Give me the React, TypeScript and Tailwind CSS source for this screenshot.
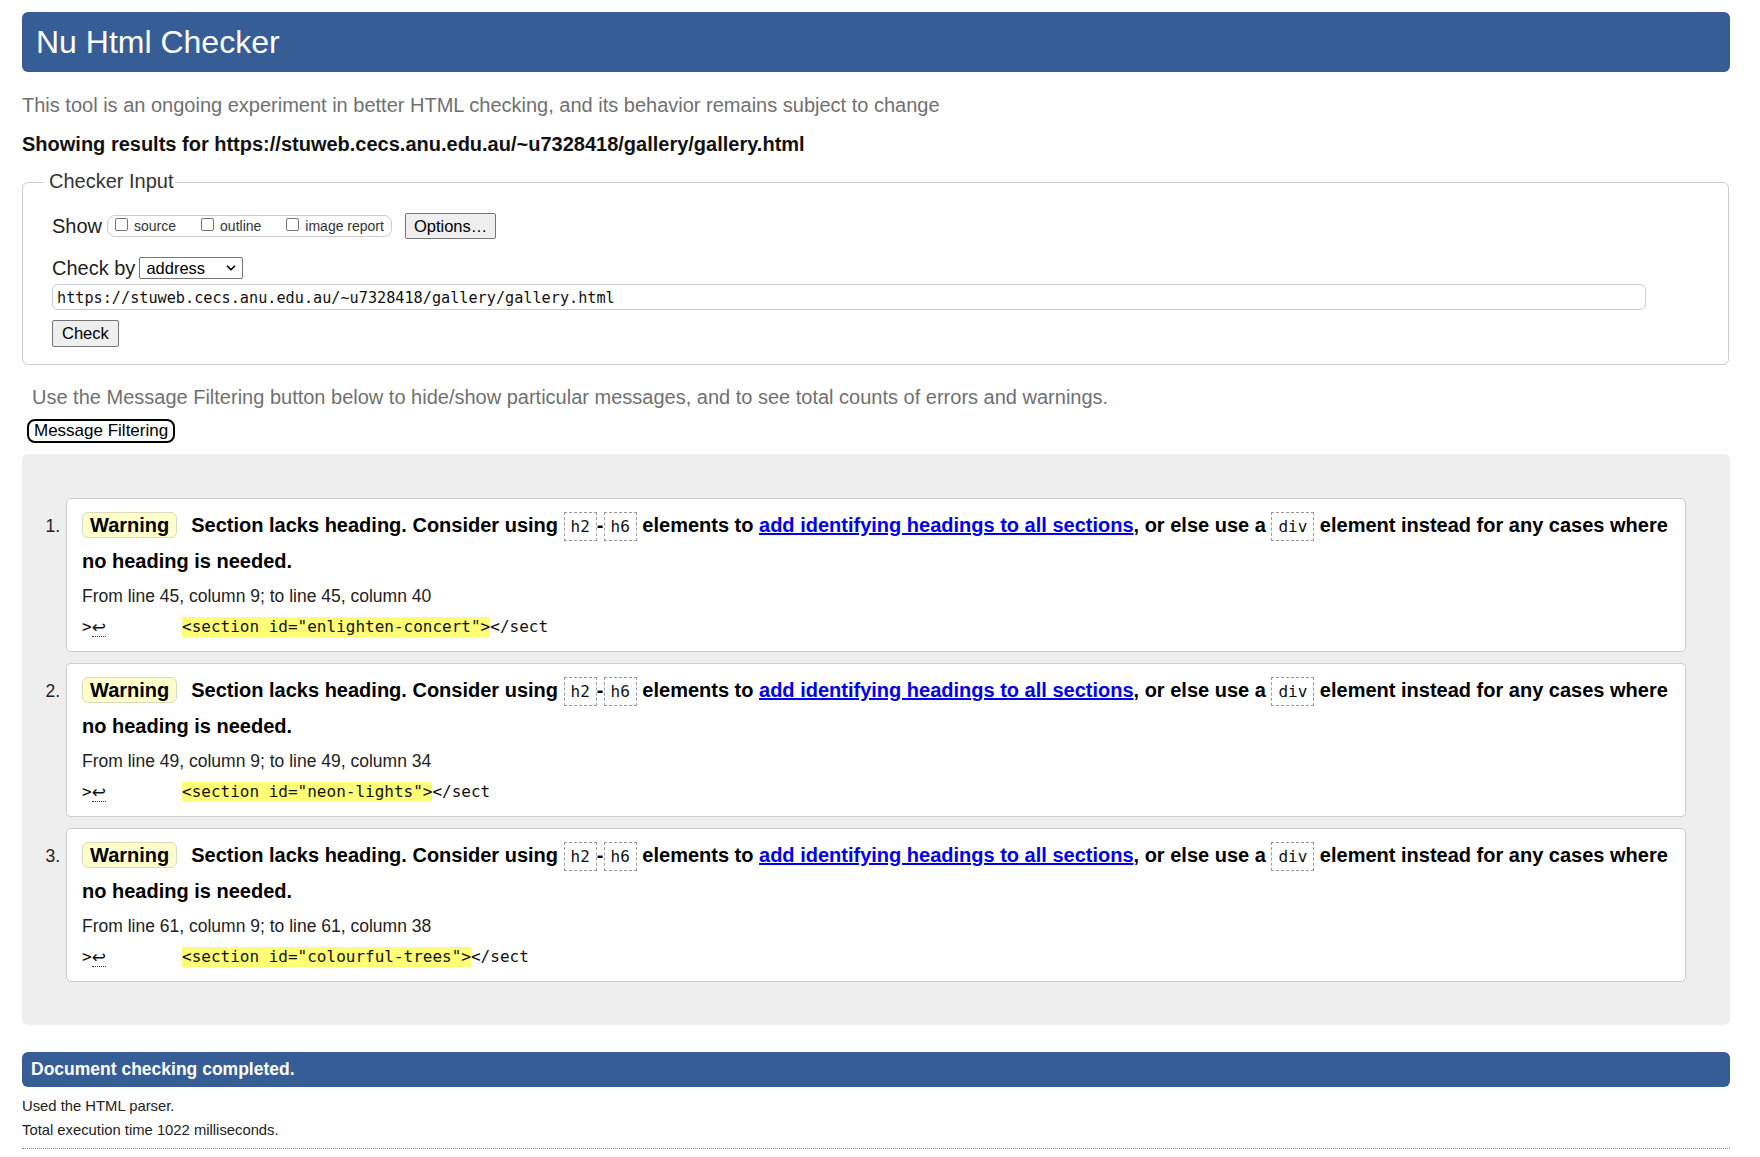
import { ChevronDown } from "lucide-react";

const messages = [
  {
    n: 1,
    from: "From line 45, column 9; to line 45, column 40",
    code: '<section id="enlighten-concert">',
  },
  {
    n: 2,
    from: "From line 49, column 9; to line 49, column 34",
    code: '<section id="neon-lights">',
  },
  {
    n: 3,
    from: "From line 61, column 9; to line 61, column 38",
    code: '<section id="colourful-trees">',
  },
];

function Code({ children }: { children: string }) {
  return (
    <code className="inline-block border border-dashed border-[#999] px-[6px] py-[2px] align-baseline font-['DejaVu_Sans_Mono',monospace] text-[16px] font-normal leading-[23px] text-[#111]">
      {children}
    </code>
  );
}

function CheckItem({ label, last }: { label: string; last?: boolean }) {
  return (
    <span className={`flex items-center ${last ? "" : "mr-[25px]"}`}>
      <span className="mb-[3px] inline-block h-[13px] w-[13px] rounded-[2px] border border-[#767676] bg-white" />
      <span className="ml-[6px] text-[14px] text-[#333]">{label}</span>
    </span>
  );
}

function Message({ n, from, code }: { n: number; from: string; code: string }) {
  return (
    <li className="flex">
      <div className="w-[44px] shrink-0 pr-[6px] pt-[10px] text-right text-[17.5px] leading-[36px] text-[#222]">
        {n}.
      </div>
      <div className="flex-1 rounded-[5px] border border-[#ccc] bg-white px-[15px] pb-[14px] pt-[8px]">
        <p className="text-[20px] font-bold leading-[36px] text-black">
          <span className="mr-[14px] inline-block rounded-[6px] border border-[#d9d9bf] bg-[#ffffcc] px-[7px] py-[1px] leading-[22px]">
            Warning
          </span>
          Section lacks heading. Consider using <Code>h2</Code>-<Code>h6</Code> elements to{" "}
          <a href="#" className="text-[#0000ee] underline">
            add identifying headings to all sections
          </a>
          , or else use a <Code>div</Code> element instead for any cases where no heading is needed.
        </p>
        <p className="mt-[5px] text-[17.5px] leading-[24px] text-[#222]">{from}</p>
        <div className="mt-[9px] flex h-[20px] items-center whitespace-pre font-['DejaVu_Sans_Mono',monospace] text-[16px] leading-[20px] text-[#111]">
          <span className="inline-flex w-[100px] shrink-0 items-center">
            {">"}
            <b className="border-b border-dotted border-[#333] font-['DejaVu_Sans',sans-serif] text-[17px] font-normal leading-[18px]">
              ↩
            </b>
          </span>
          <span className="inline-block bg-[#ffff77] leading-[20px]">{code}</span>
          <span>{"</sect"}</span>
        </div>
      </div>
    </li>
  );
}

export default function App() {
  return (
    <div className="min-h-screen bg-white pl-[22px] pr-[30px] pt-[12px] font-['Liberation_Sans',Arial,sans-serif] text-[#222]">
      <header className="flex h-[60px] items-center rounded-[6px] bg-[#365d95] pl-[14px]">
        <h1 className="text-[32px] font-normal leading-[37px] text-white">Nu Html Checker</h1>
      </header>

      <p className="mt-[22px] text-[20px] leading-[23px] text-[#707070]">
        This tool is an ongoing experiment in better HTML checking, and its behavior remains subject to change
      </p>
      <p className="mt-[16px] text-[20px] font-bold leading-[23px] text-[#111]">
        Showing results for https://stuweb.cecs.anu.edu.au/~u7328418/gallery/gallery.html
      </p>

      <div className="relative mt-[26px] mr-[1px] rounded-[6px] border border-[#ccc] pb-[17px] pl-[29px] pt-[30px]">
        <span className="absolute -top-[13px] left-[20px] bg-white pl-[6px] pr-[1px] text-[20px] leading-[23px] text-[#333]">
          Checker Input
        </span>

        <div className="flex h-[26px] items-center">
          <span className="text-[20px] leading-[23px]">Show</span>
          <div className="ml-[5px] flex h-[22px] items-center rounded-[8px] border border-[#ccc] pl-[7px] pr-[7px]">
            <CheckItem label="source" />
            <CheckItem label="outline" />
            <CheckItem label="image report" last />
          </div>
          <button className="ml-[13px] h-[26px] rounded-[2px] border border-[#767676] bg-[#efefef] px-[8px] text-[16.5px] text-black">
            Options…
          </button>
        </div>

        <div className="mt-[17px] flex h-[24px] items-center">
          <span className="text-[20px] leading-[23px]">Check by</span>
          <div className="ml-[4px] flex h-[22px] w-[104px] items-center justify-between rounded-[2px] border border-[#767676] bg-white pl-[6px] pr-[4px]">
            <span className="text-[16.5px] leading-[20px] text-black">address</span>
            <ChevronDown className="h-[14px] w-[14px] text-black" strokeWidth={3} />
          </div>
        </div>

        <div className="mt-[4px] flex h-[26px] w-[1594px] items-center rounded-[6px] border border-[#ccc] px-[4px] pt-[2px] font-['DejaVu_Sans_Mono',monospace] text-[15.2px] text-[#111]">
          https://stuweb.cecs.anu.edu.au/~u7328418/gallery/gallery.html
        </div>

        <button className="mt-[10px] block h-[27px] rounded-[2px] border border-[#767676] bg-[#efefef] px-[9px] text-[16.5px] text-black">
          Check
        </button>
      </div>

      <p className="ml-[10px] mt-[21px] text-[20px] leading-[23px] text-[#707070]">
        Use the Message Filtering button below to hide/show particular messages, and to see total counts of errors and warnings.
      </p>
      <button className="ml-[5px] mt-[10px] block h-[24px] rounded-[8px] border-2 border-black bg-white px-[5px] text-[17px] leading-[20px] text-black">
        Message Filtering
      </button>

      <ol className="mt-[11px] flex flex-col gap-[11px] rounded-[6px] bg-[#eeeeee] pb-[43px] pr-[44px] pt-[44px]">
        {messages.map((m) => (
          <Message key={m.n} {...m} />
        ))}
      </ol>

      <div className="mt-[27px] flex h-[35px] items-center rounded-[6px] bg-[#365d95] pl-[9px]">
        <span className="text-[17.5px] font-bold text-white">Document checking completed.</span>
      </div>
      <p className="mt-[7px] text-[14.8px] leading-[24px] text-[#222]">Used the HTML parser.</p>
      <p className="text-[14.8px] leading-[24px] text-[#222]">Total execution time 1022 milliseconds.</p>
      <div className="mt-[6px] border-t border-dotted border-[#888]" />
    </div>
  );
}
